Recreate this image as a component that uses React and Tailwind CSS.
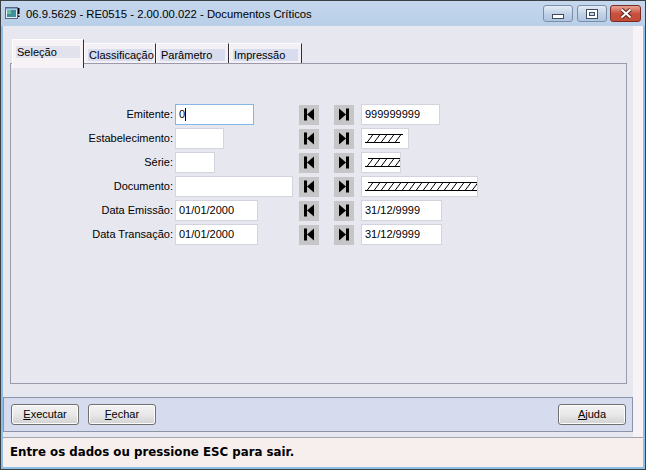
import React from 'react';

const rows = [
  { label: 'Emitente:', left: { w: 'w-[79px]', text: '0', focus: true }, right: { w: 'w-[79px]', text: '999999999' } },
  { label: 'Estabelecimento:', left: { w: 'w-[49px]' }, right: { w: 'w-[48px]', hatch: 5 } },
  { label: 'Série:', left: { w: 'w-[40px]' }, right: { w: 'w-[40px]', hatch: 5 } },
  { label: 'Documento:', left: { w: 'w-[118px]' }, right: { w: 'w-[117px]', hatch: 16 } },
  { label: 'Data Emissão:', left: { w: 'w-[83px]', text: '01/01/2000' }, right: { w: 'w-[81px]', text: '31/12/9999' } },
  { label: 'Data Transação:', left: { w: 'w-[83px]', text: '01/01/2000' }, right: { w: 'w-[81px]', text: '31/12/9999' } },
];

function Hatch({ n }) {
  const w = n * 7 + 3;
  const lines = [];
  for (let i = 0; i < n; i++) {
    lines.push(<line key={i} x1={i * 7 + 8} y1={0.5} x2={i * 7 + 2} y2={8.5} stroke="#000" strokeWidth="1" />);
  }
  return (
    <svg width={w} height="10" className="block">
      <line x1="3" y1="0.5" x2={w} y2="0.5" stroke="#000" />
      <line x1="0" y1="8.5" x2={w - 3} y2="8.5" stroke="#000" />
      {lines}
    </svg>
  );
}

function Field({ w, text, focus, hatch }) {
  return (
    <div className={`${w} h-[21px] flex items-center pl-[3px] bg-white border ${focus ? 'border-[#86b6e6]' : 'border-[#d4d4de]'}`}>
      {hatch ? <Hatch n={hatch} /> : (
        <span className="leading-none">{text}</span>
      )}
      {focus && <span className="w-px h-[13px] bg-black" />}
    </div>
  );
}

function NavButton({ dir }) {
  return (
    <div className="w-[20px] h-[20px] bg-[#c6c6c6] flex items-center justify-center">
      <svg width="10" height="13" viewBox="0 0 10 13">
        {dir === 'first' ? (
          <>
            <rect x="0" y="0.5" width="3" height="12" fill="#000" />
            <path d="M10 0.5 L10 12.5 L3 6.5 Z" fill="#000" />
          </>
        ) : (
          <>
            <path d="M0 0.5 L0 12.5 L7 6.5 Z" fill="#000" />
            <rect x="7" y="0.5" width="3" height="12" fill="#000" />
          </>
        )}
      </svg>
    </div>
  );
}

function WinButton({ children, close }) {
  return (
    <div className={`h-[17px] rounded-[3px] border flex items-center justify-center ${close
      ? 'w-[31px] border-[#7a2c24] bg-gradient-to-b from-[#e8a393] via-[#c9523f] to-[#c24a36]'
      : 'w-[30px] border-[#7d8ea8] bg-gradient-to-b from-[#e4ecf6] via-[#c3d3e7] to-[#aec4df]'}`}>
      {children}
    </div>
  );
}

function Button({ hot, rest }) {
  return (
    <div className="w-[68px] h-[21px] rounded-[3px] border border-[#707070] bg-gradient-to-b from-[#f3f3f3] via-[#e8e8e8] to-[#d2d2d2] flex items-center justify-center shadow-[inset_0_0_0_1px_#fcfcfc]">
      <span><span className="underline">{hot}</span>{rest}</span>
    </div>
  );
}

export default function App() {
  return (
    <div className="w-[646px] h-[470px] bg-[#3c3f44] p-px font-['Liberation_Sans',Arial,sans-serif] text-[11px] text-black">
      <div className="flex h-full flex-col bg-[#8dbfe6]">
        {/* title bar */}
        <div className="h-[25px] flex items-start bg-gradient-to-b from-[#c5d7ed] to-[#b9cfe8]">
          <div className="ml-[4px] mt-[6px]">
            <svg width="15" height="13" viewBox="0 0 15 13">
              <rect x="0.5" y="0.5" width="12" height="11" fill="#e8eef5" stroke="#56687e" />
              <rect x="2" y="3" width="9" height="7" fill="#3f8f9f" />
              <rect x="2" y="3" width="4" height="4" fill="#6cc0a0" />
              <rect x="1" y="1" width="11" height="1.5" fill="#7aa2c8" />
              <rect x="13" y="1" width="1.5" height="6" fill="#000" />
              <rect x="13" y="8.5" width="1.5" height="1.5" fill="#000" />
            </svg>
          </div>
          <span className="ml-[6px] mt-[6px] text-[11.3px] leading-[14px] text-black">06.9.5629 - RE0515 - 2.00.00.022 - Documentos Críticos</span>
          <div className="ml-auto mr-[4px] mt-[4px] flex gap-[3px]">
            <WinButton>
              <svg width="14" height="8" viewBox="0 0 14 8" className="mt-[5px]">
                <rect x="1.5" y="2.5" width="11" height="4" fill="#fff" stroke="#404c60" />
              </svg>
            </WinButton>
            <div className="ml-px">
              <WinButton>
                <svg width="12" height="10" viewBox="0 0 12 10">
                  <rect x="0.5" y="0.5" width="11" height="9" fill="#fff" stroke="#404c60" />
                  <rect x="3.5" y="3.5" width="5" height="3" fill="#c8d6e8" stroke="#404c60" />
                </svg>
              </WinButton>
            </div>
            <WinButton close>
              <svg width="14" height="11" viewBox="0 0 14 11">
                <path d="M2.5 1.5 L11.5 9.5 M11.5 1.5 L2.5 9.5" stroke="#5a2018" strokeWidth="4" />
                <path d="M2.5 1.5 L11.5 9.5 M11.5 1.5 L2.5 9.5" stroke="#fff" strokeWidth="2" />
              </svg>
            </WinButton>
          </div>
        </div>

        {/* client */}
        <div className="mx-[2px] mb-[2px] flex flex-1 flex-col bg-[#f6f2f6]">
          <div className="h-[411px] w-[630px] bg-[#e7e7ef] pt-[13px]">
            {/* tabs */}
            <div className="ml-[9px] flex h-[24px] items-start">
              <div className="relative z-10 h-[29px] w-[72px] border-l border-t border-white border-r border-r-[#303030] bg-[#f6f2f6] pl-[3px] pt-[6px]">
                <div className="h-[12px] w-[64px] bg-[#e2e2ec] leading-[12px] pl-px">Seleção</div>
              </div>
              {[['Classificação', 'w-[72px]'], ['Parâmetro', 'w-[73px]'], ['Impressão', 'w-[73px]']].map(([t, w]) => (
                <div key={t} className={`${w} mt-[4px] h-[20px] border-l border-t border-[#fbfbfd] border-r border-r-[#303030] bg-[#f2f0f4] pl-[3px] pr-[3px] pt-[5px]`}>
                  <div className="h-[12px] bg-[#d8dcef] leading-[13px] pl-px">{t}</div>
                </div>
              ))}
            </div>

            {/* panel */}
            <div className="ml-[7px] h-[321px] w-[617px] border border-[#9a9aaa] pt-[40px]">
              <div className="flex flex-col gap-[3px]">
                {rows.map((r) => (
                  <div key={r.label} className="flex h-[21px] items-center">
                    <div className="w-[162px] text-right">{r.label}</div>
                    <div className="ml-[2px] w-[124px]">
                      <Field {...r.left} />
                    </div>
                    <NavButton dir="first" />
                    <div className="ml-[15px]">
                      <NavButton dir="last" />
                    </div>
                    <div className="ml-[7px]">
                      <Field {...r.right} />
                    </div>
                  </div>
                ))}
              </div>
            </div>

            {/* button bar */}
            <div className="mt-[13px] flex h-[35px] w-[630px] items-start gap-[9px] border border-[#8a94a8] bg-[#d7dbee] pl-[7px] pr-[6px] pt-[6px]">
              <Button hot="E" rest="xecutar" />
              <Button hot="F" rest="echar" />
              <div className="ml-auto">
                <Button hot="A" rest="juda" />
              </div>
            </div>
          </div>

          {/* status bar */}
          <div className="flex flex-1 items-center border-t border-[#a4a4ac] bg-[#f7eeee] pl-[7px]">
            <span className="font-['DejaVu_Sans',Verdana,sans-serif] text-[11.8px] font-bold">Entre os dados ou pressione ESC para sair.</span>
          </div>
        </div>
      </div>
    </div>
  );
}
